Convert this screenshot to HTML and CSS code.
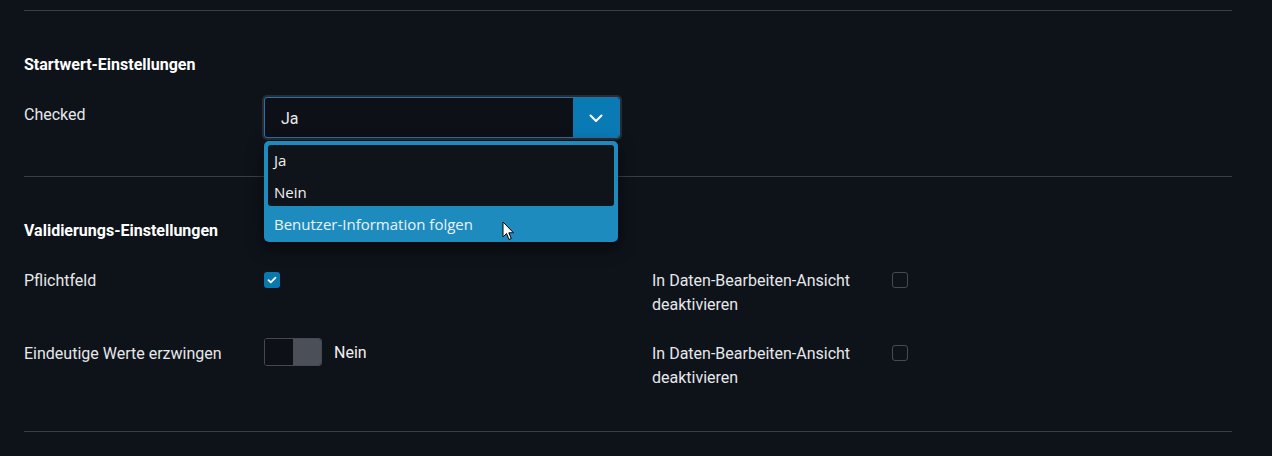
FILE: index.html
```html
<!DOCTYPE html>
<html lang="de">
  <head>
    <meta charset="UTF-8" />
    <meta name="viewport" content="width=device-width, initial-scale=1.0" />
    <title>Feld-Einstellungen</title>
    <link rel="stylesheet" href="styles.css">
  </head>
  <body>
    <div class="settings">
      <div class="section section-start">
        <h3>Startwert-Einstellungen</h3>
        <div class="row">
          <label class="label">Checked</label>
          <div class="select-wrap">
            <div class="select">
              <span class="select-value">Ja</span>
              <span class="select-btn">
                <svg width="14" height="9" viewBox="0 0 14 9"><path d="M1.5 1.5 L7 7 L12.5 1.5" fill="none" stroke="#fff" stroke-width="2" stroke-linecap="round" stroke-linejoin="round"/></svg>
              </span>
            </div>
            <ul class="options">
              <li>Ja</li>
              <li>Nein</li>
              <li class="active">Benutzer-Information folgen</li>
            </ul>
            <svg class="cursor" width="13" height="20" viewBox="0 0 13 20"><path d="M1 1 L1 16 L4.5 12.5 L7 18.5 L9.3 17.5 L6.8 11.8 L11.5 11.8 Z" fill="#fff" stroke="#000" stroke-width="1"/></svg>
          </div>
        </div>
      </div>

      <div class="section section-valid">
        <h3>Validierungs-Einstellungen</h3>
        <div class="row">
          <label class="label">Pflichtfeld</label>
          <div class="control">
            <span class="checkbox checked">
              <svg width="10" height="8" viewBox="0 0 10 8"><path d="M1.5 4.2 L3.8 6.3 L8.5 1.6" fill="none" stroke="#fff" stroke-width="1.8" stroke-linecap="round" stroke-linejoin="round"/></svg>
            </span>
          </div>
          <label class="label label-right">In Daten-Bearbeiten-Ansicht deaktivieren</label>
          <div class="control"><span class="checkbox"></span></div>
        </div>
        <div class="row">
          <label class="label">Eindeutige Werte erzwingen</label>
          <div class="control control-toggle">
            <span class="toggle"><span class="toggle-off"></span><span class="toggle-knob"></span></span>
            <span class="toggle-text">Nein</span>
          </div>
          <label class="label label-right">In Daten-Bearbeiten-Ansicht deaktivieren</label>
          <div class="control"><span class="checkbox"></span></div>
        </div>
      </div>
    </div>
  </body>
</html>
```

FILE: styles.css
```css
body {
  margin: 0;
  background: #0e131a;
  color: #e6e8eb;
  font-family: Roboto, "Liberation Sans", sans-serif;
  font-size: 16px;
}

.settings {
  width: 1208px;
  margin-left: 24px;
  padding-top: 10px;
  border-bottom: 1px solid #3a3f47;
  height: 421px;
}

.section {
  border-top: 1px solid #3a3f47;
  padding-top: 44px;
}

.section h3 {
  margin: 0;
  font-size: 16px;
  font-weight: 700;
  line-height: 20px;
  color: #fff;
}

.section-start {
  padding-bottom: 38px;
}

.section-start h3 {
  margin-bottom: 22px;
}

.section-valid h3 {
  margin-bottom: 27px;
}

.row {
  display: grid;
  grid-template-columns: 240px 388px 240px 40px;
  align-items: start;
  line-height: 24px;
}

.section-valid .row + .row {
  margin-top: 24px;
}

.label {
  padding-top: 1px;
}

.section-start .label {
  padding-top: 6px;
}

.label-right {
  width: 215px;
}

.control {
  display: flex;
  align-items: center;
  height: 24px;
}

/* select */
.select-wrap {
  position: relative;
  width: 356px;
}

.select {
  display: flex;
  height: 41px;
  box-sizing: border-box;
  border: 1px solid #2d6fa0;
  border-radius: 3px;
  box-shadow: 0 0 0 2px #252c36;
  background: #0d1117;
  overflow: hidden;
}

.select-value {
  flex: 1;
  padding-left: 16px;
  line-height: 41px;
  font-size: 16px;
  color: #e8eaed;
}

.select-btn {
  width: 46px;
  background: #0a7ab5;
  display: flex;
  align-items: center;
  justify-content: center;
  padding-top: 2px;
}

.options {
  position: absolute;
  top: 44px;
  left: 0;
  width: 354px;
  margin: 0;
  padding: 4px;
  box-sizing: border-box;
  list-style: none;
  background: #1e8bbf;
  border-radius: 5px;
  box-shadow: 0 6px 16px rgba(0, 0, 0, 0.55);
  font-family: "Open Sans", "Noto Sans", sans-serif;
  font-size: 15px;
}

.options li {
  height: 32px;
  line-height: 30px;
  padding-left: 6px;
  background: #0f131a;
  color: #f2f2f2;
}

.options li:first-child {
  border-radius: 3px 3px 0 0;
}

.options li:nth-child(2) {
  height: 29px;
  border-radius: 0 0 3px 3px;
}

.options li.active {
  background: transparent;
  color: #e9f4fa;
  line-height: 36px;
}

.cursor {
  position: absolute;
  left: 238px;
  top: 124px;
}

/* checkbox */
.checkbox {
  display: inline-flex;
  align-items: center;
  justify-content: center;
  width: 16px;
  height: 16px;
  box-sizing: border-box;
  border: 1.5px solid #464b53;
  border-radius: 3px;
}

.checkbox.checked {
  background: #0a78b0;
  border: none;
}

/* toggle */
.control-toggle {
  height: 24px;
  gap: 12px;
}

.toggle {
  display: flex;
  width: 58px;
  height: 28px;
  box-sizing: border-box;
  border: 1px solid #454a52;
  border-radius: 3px;
  overflow: hidden;
  margin-top: -2px;
}

.toggle-off {
  flex: 1;
  background: #0d1117;
}

.toggle-knob {
  width: 28px;
  background: #4b5058;
}

.toggle-text {
  color: #f0f0f0;
}
```
